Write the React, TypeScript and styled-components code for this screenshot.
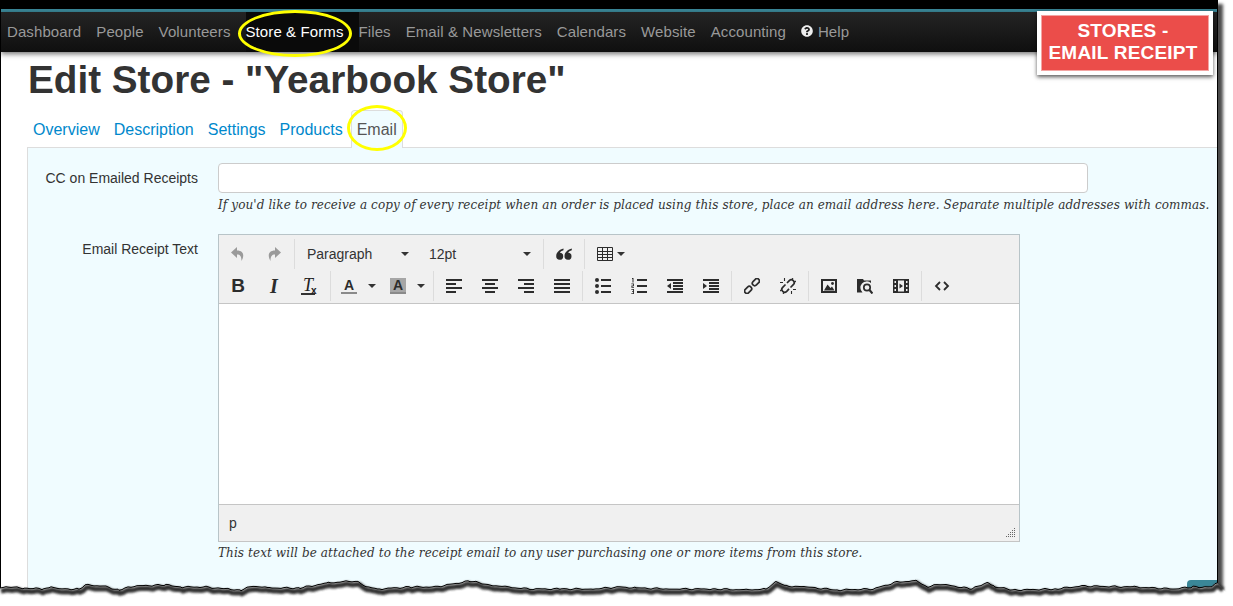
import styled, { createGlobalStyle } from "styled-components";
import { FaQuestionCircle } from "react-icons/fa";

const GlobalStyle = createGlobalStyle`
  html, body {
    margin: 0;
    background: #fff;
    font-family: "Liberation Sans", Arial, sans-serif;
    color: #333;
  }
`;

const Page = styled.div`
  position: relative;
  width: 1233px;
  height: 606px;
  overflow: hidden;
  background: #fff;
`;

const Frame = styled.div`
  width: 1216px;
  height: 592px;
  border-left: 1px solid #000;
  border-right: 1px solid #000;
  background: #fff;
  box-shadow: 5px 4px 3px rgba(0, 0, 0, 0.7);
`;

const Clip = styled.div`
  height: 592px;
  overflow: hidden;
`;

const TopEdge = styled.div`
  height: 9px;
  background: #000;
  border-bottom: 3px solid #3a8798;
`;

const Nav = styled.nav`
  position: relative;
  display: flex;
  height: 40px;
  padding-left: 6px;
  background: linear-gradient(#242424, #0f0f0f);
  box-shadow: 0 2px 5px rgba(0, 0, 0, 0.55);
`;

const NavItem = styled.a<{ $active?: boolean }>`
  position: relative;
  display: flex;
  align-items: center;
  gap: 5px;
  padding: 0 15px 2px 0;
  font-size: 15px;
  letter-spacing: 0.1px;
  color: ${(props) => (props.$active ? "#fff" : "#999")};
  background: ${(props) => (props.$active ? "#0a0a0a" : "transparent")};
`;

const Ring = styled.span`
  position: absolute;
  box-sizing: border-box;
  border: 3px solid #ff0;
  border-radius: 50%;
  pointer-events: none;
`;

const NavRing = styled(Ring)`
  left: -8px;
  top: -2px;
  width: 114px;
  height: 47px;
`;

const TabRing = styled(Ring)`
  left: -5px;
  top: -6px;
  width: 60px;
  height: 46px;
`;

const Badge = styled.div`
  position: absolute;
  left: 1037px;
  top: 11px;
  box-sizing: border-box;
  width: 176px;
  height: 64px;
  border: 4px solid #fff;
  outline: 1px solid #f3a5a3;
  outline-offset: -5px;
  background: #eb4d4a;
  color: #fff;
  font-size: 19px;
  letter-spacing: 0.2px;
  font-weight: bold;
  line-height: 22px;
  text-align: center;
  padding: 5px 4px 0 0;
  box-shadow: 0 2px 4px rgba(0, 0, 0, 0.65);
`;

const Main = styled.main`
  padding: 8px 0 0 26px;
`;

const Title = styled.h1`
  margin: 0 0 0 1px;
  font-size: 38.7px;
  line-height: 40px;
  font-weight: bold;
  color: #333;
`;

const Tabs = styled.div`
  display: flex;
  gap: 2px;
  margin: 10px 0 0 0;
  height: 37px;
`;

const Tab = styled.a<{ $active?: boolean }>`
  position: relative;
  box-sizing: border-box;
  height: ${(props) => (props.$active ? "38px" : "37px")};
  padding: 9px 5px 0;
  font-size: 16px;
  line-height: 20px;
  color: ${(props) => (props.$active ? "#555" : "#0088cc")};
  background: ${(props) => (props.$active ? "#f0fcff" : "transparent")};
  border: ${(props) => (props.$active ? "1px solid #ddd" : "1px solid transparent")};
  border-bottom: 0;
  border-radius: 4px 4px 0 0;
  z-index: 1;
`;

const Panel = styled.section`
  box-sizing: border-box;
  height: 460px;
  padding: 15px 0 0;
  background: #f0fcff;
  border-top: 1px solid #ddd;
  border-left: 1px solid #ddd;
`;

const FormRow = styled.div`
  display: grid;
  grid-template-columns: 170px 1fr;
  column-gap: 20px;
  margin-bottom: 20px;
`;

const Label = styled.label`
  padding-top: 7px;
  font-size: 14px;
  line-height: 17px;
  text-align: right;
  color: #333;
`;

const Input = styled.div`
  box-sizing: border-box;
  width: 870px;
  height: 30px;
  background: #fff;
  border: 1px solid #ccc;
  border-radius: 4px;
`;

const Help = styled.p`
  margin: 3px 0 0;
  font-family: "DejaVu Serif", "Liberation Serif", serif;
  font-style: italic;
  font-size: 12px;
  line-height: 18px;
  white-space: nowrap;
  letter-spacing: 0.1px;
  color: #333;
`;

const Editor = styled.div`
  box-sizing: border-box;
  width: 802px;
  height: 308px;
  margin-bottom: -1px;
  display: flex;
  flex-direction: column;
  background: #fff;
  border: 1px solid #b8c4c8;
  border-bottom-color: #c5c5c5;
`;

const Toolbar = styled.div`
  box-sizing: border-box;
  height: 69px;
  padding: 3px 0 0 1px;
  background: #f0f0f0;
  border-bottom: 1px solid #c5c5c5;
`;

const ToolRow = styled.div`
  display: flex;
  height: 32px;
`;

const Group = styled.div<{ $last?: boolean }>`
  display: flex;
  align-items: center;
  height: 30px;
  margin: 1px 2px 0 0;
  padding-right: 2px;
  border-right: ${(props) => (props.$last ? "0" : "1px solid #dcdcdc")};
`;

const ToolButton = styled.span<{ $muted?: boolean }>`
  display: flex;
  align-items: center;
  justify-content: center;
  width: 36px;
  height: 30px;
  color: ${(props) => (props.$muted ? "#9a9a9a" : "#2c2c2c")};
`;

const SelectBox = styled.span<{ $width: number }>`
  display: flex;
  align-items: center;
  justify-content: space-between;
  box-sizing: border-box;
  width: ${(props) => props.$width}px;
  height: 30px;
  padding: 0 10px;
  font-size: 14px;
  color: #333;
`;

const Caret = styled.i`
  display: block;
  width: 0;
  height: 0;
  border-left: 4px solid transparent;
  border-right: 4px solid transparent;
  border-top: 4px solid #333;
`;

const SplitButton = styled.span`
  display: flex;
  align-items: center;
  box-sizing: border-box;
  width: 49px;
  height: 30px;
  padding-left: 8px;
  gap: 11px;
`;

const TableButton = styled.span`
  display: flex;
  align-items: center;
  gap: 4px;
  width: 48px;
  height: 30px;
  padding-left: 10px;
  box-sizing: border-box;
  color: #2c2c2c;
`;

const BoldGlyph = styled.span`
  font: bold 19px "Liberation Sans", sans-serif;
  color: #2c2c2c;
`;

const ItalicGlyph = styled.span`
  font: italic bold 20px "Liberation Serif", serif;
  color: #2c2c2c;
`;

const ClearGlyph = styled.span`
  position: relative;
  display: block;
  width: 14px;
  height: 17px;
  font: italic 18px/15px "Liberation Serif", serif;
  color: #222;
  border-bottom: 2px solid #333;
  box-sizing: border-box;
  padding-left: 2px;
  margin-right: 4px;

  small {
    position: absolute;
    left: 10px;
    top: 8px;
    font: bold 10px/10px "Liberation Sans", sans-serif;
  }
`;

const ColorGlyph = styled.span<{ $filled?: boolean }>`
  box-sizing: border-box;
  display: block;
  width: 16px;
  height: 16px;
  font: bold 14px/14px "Liberation Sans", sans-serif;
  text-align: center;
  color: #2c2c2c;
  background: ${(props) => (props.$filled ? "#a6a6a6" : "transparent")};
  border-bottom: 2px solid #8a8a8a;
`;

const EditArea = styled.div`
  flex: 1;
  background: #fff;
`;

const StatusBar = styled.div`
  position: relative;
  box-sizing: border-box;
  height: 37px;
  padding: 10px 10px 0;
  background: #f0f0f0;
  border-top: 1px solid #c5c5c5;
  font-size: 14px;
  line-height: 16px;
  color: #333;
`;

const ResizeGrip = styled.svg`
  position: absolute;
  right: 3px;
  bottom: 3px;
`;

const CornerButton = styled.div`
  position: absolute;
  left: 1187px;
  top: 580px;
  width: 30px;
  height: 12px;
  background: #3a8798;
  border-radius: 4px 0 0 0;
`;

const TornEdge = styled.svg`
  position: absolute;
  left: 0;
  top: 570px;
`;

const Icon = ({ children }: { children: React.ReactNode }) => (
  <svg width="16" height="16" viewBox="0 0 16 16" fill="currentColor">
    {children}
  </svg>
);

const Lines = ({ rows }: { rows: [number, number][] }) => (
  <Icon>
    {rows.map(([x, w], index) => (
      <rect key={index} x={x} y={1 + index * 4} width={w} height="2" />
    ))}
  </Icon>
);

const ListRows = () => (
  <>
    <rect x="6" y="1" width="10" height="2" />
    <rect x="6" y="7" width="10" height="2" />
    <rect x="6" y="13" width="10" height="2" />
  </>
);

const IndentRows = () => (
  <>
    <rect x="0" y="1" width="16" height="2" />
    <rect x="6" y="4" width="10" height="2" />
    <rect x="6" y="7" width="10" height="2" />
    <rect x="6" y="10" width="10" height="2" />
    <rect x="0" y="13" width="16" height="2" />
  </>
);

const UndoIcon = () => (
  <Icon>
    <path d="M7 1 1 6.500 7 12V8.500c3 0 4.500 1.500 4.500 6.500 3-5 2.500-10.500-4.500-10.500z" />
  </Icon>
);

const RedoIcon = () => (
  <Icon>
    <path d="M9 1l6 5.500L9 12V8.500c-3 0-4.500 1.500-4.500 6.500-3-5-2.500-10.500 4.500-10.500z" />
  </Icon>
);

const QuoteIcon = () => (
  <Icon>
    <path d="M7.500 2.500C3.500 3.500.2 6.300.2 10.300a3.500 3.500 0 1 0 3.700-3.500C4.300 5.800 5.800 4.800 7.500 4.300z" />
    <path transform="translate(8.300 0)" d="M7.500 2.500C3.500 3.500.2 6.300.2 10.300a3.500 3.500 0 1 0 3.700-3.500C4.300 5.800 5.800 4.800 7.500 4.300z" />
  </Icon>
);

const TableIcon = () => (
  <Icon>
    <path
      fill="none"
      stroke="currentColor"
      d="M.5 1.500h15v13H.5zM.5 5.500h15M.5 8.500h15M.5 11.500h15M5.500 1.500v13M10.500 1.500v13"
    />
  </Icon>
);

const BulletIcon = () => (
  <Icon>
    <circle cx="2" cy="2" r="2" />
    <circle cx="2" cy="8" r="2" />
    <circle cx="2" cy="14" r="2" />
    <ListRows />
  </Icon>
);

const NumberIcon = () => (
  <Icon>
    <path d="M1 0h1.500v4.500H1.500V1H1zM.3 5.500H3v2.700H1.400v.8H3v.7H.4V7.600h1.700v-1.400H.3zM.3 11H3v5H.3v-.8h1.800v-1.300H1v-.7h1.100v-1.400H.3z" />
    <ListRows />
  </Icon>
);

const OutdentIcon = () => (
  <Icon>
    <IndentRows />
    <path d="M4 5v6L0 8z" />
  </Icon>
);

const IndentIcon = () => (
  <Icon>
    <IndentRows />
    <path d="M0 5v6l4-3z" />
  </Icon>
);

const LinkIcon = () => (
  <Icon>
    <g fill="none" stroke="currentColor" strokeWidth="1.700">
      <rect x="-5.500" y="-2.400" width="8" height="4.800" rx="2.400" transform="translate(5.200 10.800) rotate(-45)" />
      <rect x="-2.500" y="-2.400" width="8" height="4.800" rx="2.400" transform="translate(10.800 5.200) rotate(-45)" />
    </g>
  </Icon>
);

const UnlinkIcon = () => (
  <Icon>
    <g fill="none" stroke="currentColor" strokeWidth="1.700">
      <path d="M5.500 6.500 2.700 9.300a2.800 2.800 0 0 0 4 4l2.300-2.500M10.500 9.500l2.800-2.800a2.800 2.800 0 0 0-4-4L7 5" />
      <path d="M4.500 0v3M0 4.500h3M11.500 16v-3M16 11.500h-3M13 0l-1.500 2M16 3l-2 1.500M3 16l1.500-2M0 13l2-1.500" strokeWidth="1.100" />
    </g>
  </Icon>
);

const ImageIcon = () => (
  <Icon>
    <path d="M0 1h16v14H0zM2 3v10h12V3z" fillRule="evenodd" />
    <path d="M3 12.500l3.500-6 3 3.500 1.500-1.500 2.500 4z" />
    <circle cx="11.500" cy="5.500" r="1.400" />
  </Icon>
);

const BrowseIcon = () => (
  <Icon>
    <path d="M0 3V1h6l1 1.500h7V5A6 6 0 0 0 5.500 14.500H0z" />
    <g fill="none" stroke="currentColor">
      <circle cx="10" cy="9.500" r="3.200" strokeWidth="1.700" />
      <path d="M12.500 12 15.500 15.500" strokeWidth="2.200" />
    </g>
  </Icon>
);

const MediaIcon = () => (
  <Icon>
    <path
      fillRule="evenodd"
      d="M0 1h16v14H0zM1.500 3v2h1.500V3zM13 3v2h1.500V3zM1.500 7v2h1.500V7zM13 7v2h1.500V7zM1.500 11v2h1.500v-2zM13 11v2h1.500v-2zM5 2.500v11h6v-11z"
    />
    <path d="M6.500 5.500v5l3.500-2.500z" />
  </Icon>
);

const CodeIcon = () => (
  <Icon>
    <path d="M6 4 2 8l4 4M10 4l4 4-4 4" fill="none" stroke="currentColor" strokeWidth="1.800" />
  </Icon>
);

const alignments: [number, number][][] = [
  [[0, 16], [0, 10], [0, 16], [0, 10]],
  [[0, 16], [3, 10], [0, 16], [3, 10]],
  [[0, 16], [6, 10], [0, 16], [6, 10]],
  [[0, 16], [0, 16], [0, 16], [0, 16]],
];

const tearPoints: [number, number][] = [
  [0, 588], [8, 587], [24, 588], [43, 589], [51, 587], [59, 589], [79, 589], [85, 585], [103, 586], [119, 590],
  [134, 586], [166, 585], [182, 587], [206, 587], [225, 589], [241, 590], [253, 586], [269, 588], [300, 588],
  [328, 583], [352, 581], [358, 582], [366, 587], [379, 589], [411, 587], [435, 587], [470, 581], [490, 585],
  [506, 587], [530, 589], [561, 589], [593, 589], [620, 587], [636, 588], [671, 589], [715, 589], [746, 590],
  [766, 589], [776, 582], [786, 586], [806, 587], [837, 590], [873, 589], [897, 582], [916, 581], [928, 587],
  [940, 584], [972, 589], [988, 582], [995, 587], [1015, 590], [1055, 589], [1082, 586], [1134, 587], [1173, 589],
  [1193, 587], [1212, 587], [1217, 583],
];

// rough up the hand-read outline so that it looks like torn paper
const tearLine = () => {
  const out: string[] = [];
  tearPoints.forEach(([x, y], index) => {
    const next = tearPoints[index + 1];
    if (!next) {
      out.push(`${x},${y - 570}`);
      return;
    }
    for (let px = x; px < next[0]; px += 3) {
      const t = (px - x) / (next[0] - x);
      const noise = Math.sin(px * 1.7) * 0.5 + Math.sin(px * 0.63) * 0.4;
      out.push(`${px},${(y + (next[1] - y) * t + noise - 570).toFixed(1)}`);
    }
  });
  return out.join(" ");
};

const navItems = ["Dashboard", "People", "Volunteers", "Store & Forms", "Files", "Email & Newsletters", "Calendars", "Website", "Accounting"];
const tabItems = ["Overview", "Description", "Settings", "Products"];

export default function App() {
  const line = tearLine();

  return (
    <Page>
      <GlobalStyle />
      <Frame>
        <Clip>
          <TopEdge />
          <Nav>
            {navItems.map((item) => (
              <NavItem key={item} $active={item === "Store & Forms"}>
                {item}
                {item === "Store & Forms" && <NavRing />}
              </NavItem>
            ))}
            <NavItem>
              <FaQuestionCircle size={12} color="#eee" />
              Help
            </NavItem>
          </Nav>
          <Main>
            <Title>Edit Store - "Yearbook Store"</Title>
            <Tabs>
              {tabItems.map((item) => (
                <Tab key={item}>{item}</Tab>
              ))}
              <Tab $active>
                Email
                <TabRing />
              </Tab>
            </Tabs>
            <Panel>
              <FormRow>
                <Label>CC on Emailed Receipts</Label>
                <div>
                  <Input />
                  <Help>
                    If you'd like to receive a copy of every receipt when an order is placed using this store, place an email address here. Separate multiple addresses with commas.
                  </Help>
                </div>
              </FormRow>
              <FormRow>
                <Label>Email Receipt Text</Label>
                <div>
                  <Editor>
                    <Toolbar>
                      <ToolRow>
                        <Group>
                          <ToolButton $muted><UndoIcon /></ToolButton>
                          <ToolButton $muted><RedoIcon /></ToolButton>
                        </Group>
                        <Group>
                          <SelectBox $width={122}>Paragraph<Caret /></SelectBox>
                          <SelectBox $width={122}>12pt<Caret /></SelectBox>
                        </Group>
                        <Group>
                          <ToolButton><QuoteIcon /></ToolButton>
                        </Group>
                        <Group $last>
                          <TableButton><TableIcon /><Caret /></TableButton>
                        </Group>
                      </ToolRow>
                      <ToolRow>
                        <Group>
                          <ToolButton><BoldGlyph>B</BoldGlyph></ToolButton>
                          <ToolButton><ItalicGlyph>I</ItalicGlyph></ToolButton>
                          <ToolButton><ClearGlyph>T<small>x</small></ClearGlyph></ToolButton>
                        </Group>
                        <Group>
                          <SplitButton><ColorGlyph>A</ColorGlyph><Caret /></SplitButton>
                          <SplitButton><ColorGlyph $filled>A</ColorGlyph><Caret /></SplitButton>
                        </Group>
                        <Group>
                          {alignments.map((rows, index) => (
                            <ToolButton key={index}><Lines rows={rows} /></ToolButton>
                          ))}
                        </Group>
                        <Group>
                          <ToolButton><BulletIcon /></ToolButton>
                          <ToolButton><NumberIcon /></ToolButton>
                          <ToolButton><OutdentIcon /></ToolButton>
                          <ToolButton><IndentIcon /></ToolButton>
                        </Group>
                        <Group>
                          <ToolButton><LinkIcon /></ToolButton>
                          <ToolButton><UnlinkIcon /></ToolButton>
                        </Group>
                        <Group>
                          <ToolButton><ImageIcon /></ToolButton>
                          <ToolButton><BrowseIcon /></ToolButton>
                          <ToolButton><MediaIcon /></ToolButton>
                        </Group>
                        <Group $last>
                          <ToolButton><CodeIcon /></ToolButton>
                        </Group>
                      </ToolRow>
                    </Toolbar>
                    <EditArea />
                    <StatusBar>
                      p
                      <ResizeGrip width="10" height="10" viewBox="0 0 10 10" fill="#666">
                        {[[8, 0], [8, 2], [6, 2], [8, 4], [6, 4], [4, 4], [8, 6], [6, 6], [4, 6], [2, 6], [8, 8], [6, 8], [4, 8], [2, 8], [0, 8]].map(([x, y]) => (
                          <rect key={`${x}-${y}`} x={x} y={y} width="1" height="1" />
                        ))}
                      </ResizeGrip>
                    </StatusBar>
                  </Editor>
                  <Help>This text will be attached to the receipt email to any user purchasing one or more items from this store.</Help>
                </div>
              </FormRow>
            </Panel>
          </Main>
        </Clip>
      </Frame>
      <CornerButton />
      <TornEdge width="1233" height="36" viewBox="0 0 1233 36">
        <defs>
          <filter id="tear-blur" x="-2%" y="-50%" width="104%" height="200%">
            <feGaussianBlur stdDeviation="1" />
          </filter>
        </defs>
        <polygon points={`${line} 1226,22 1233,22 1233,36 0,36`} fill="#fff" />
        <polyline points={`${line} 1222,17`} transform="translate(1 3)" fill="none" stroke="#333" strokeWidth="5" filter="url(#tear-blur)" />
        <polyline points={line} fill="none" stroke="#000" strokeWidth="1" />
      </TornEdge>
      <Badge>
        STORES -
        <br />
        EMAIL RECEIPT
      </Badge>
    </Page>
  );
}
